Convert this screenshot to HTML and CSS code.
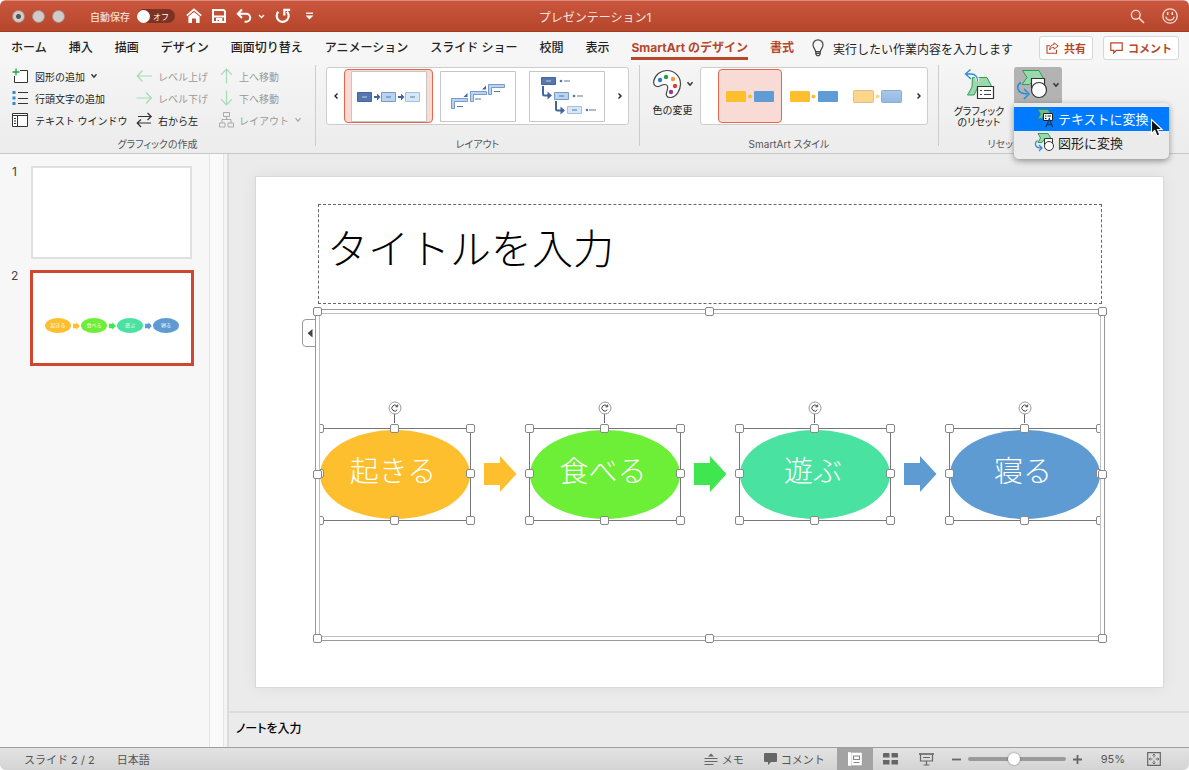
FILE: index.html
```html
<!DOCTYPE html>
<html lang="ja">
<head>
  <meta charset="UTF-8">
  <meta name="viewport" content="width=device-width, initial-scale=1.0">
  <title>プレゼンテーション1</title>
  <link rel="stylesheet" href="styles.css">
</head>
<body>
  <div class="window">
    <header class="titlebar">
      <div class="title-left">
        <button type="button" class="light edited" aria-label="閉じる"></button>
        <button type="button" class="light" aria-label="しまう"></button>
        <button type="button" class="light" aria-label="拡大"></button>
        <label class="autosave" for="autosave">自動保存</label>
        <span class="switch"><input type="checkbox" id="autosave"><span class="switch-text">オフ</span></span>
        <button type="button" class="quick" aria-label="ホーム">
          <svg width="16" height="16" viewBox="0 0 16 16"><path d="M.8 7.6 8 1.4l7.2 6.2" fill="none" stroke="#fff" stroke-width="1.8"/><path d="M2.4 8.6 8 3.9l5.6 4.7V15H10v-4.6H6V15H2.4z" fill="#fff"/></svg>
        </button>
        <button type="button" class="quick save" aria-label="保存">
          <svg width="14" height="14" viewBox="0 0 14 14"><path d="M1 1h10.6L13 2.4V13H1z" fill="none" stroke="#fff" stroke-width="2"/><path d="M2 6.6h10v2H2zM4 9h6.4v4.4H7V11H5.6v2.4H4z" fill="#fff"/></svg>
        </button>
        <button type="button" class="quick undo" aria-label="元に戻す">
          <svg width="16" height="14" viewBox="0 0 16 14"><path d="M6 .5 1.8 4.800 6 9M2 4.800h8.200a4 4 0 0 1 0 8H8.600" fill="none" stroke="#fff" stroke-width="2.100"/></svg>
          <svg width="7" height="5" viewBox="0 0 7 5"><path d="M1 1l2.5 2.5L6 1" fill="none" stroke="#fff" stroke-width="1.3"/></svg>
        </button>
        <button type="button" class="quick" aria-label="繰り返し">
          <svg width="16" height="16" viewBox="0 0 16 16"><path d="M3.300 3.800a6 6 0 1 0 8.600-.2M15.200 1.800H9.300v5.600" fill="none" stroke="#fff" stroke-width="2.200"/></svg>
        </button>
        <button type="button" class="quick more" aria-label="カスタマイズ">
          <svg width="9" height="8" viewBox="0 0 9 8"><path d="M1 1.2h7" stroke="#fff" stroke-width="1.3"/><path d="M.6 3.4h7.8L4.5 7.4z" fill="#fff"/></svg>
        </button>
      </div>
      <h1 class="doc-title">プレゼンテーション1</h1>
      <div class="title-right">
        <button type="button" aria-label="検索">
          <svg width="15" height="15" viewBox="0 0 15 15"><circle cx="5.8" cy="5.8" r="4.4" fill="none" stroke="#f6dcd5" stroke-width="1.4"/><path d="M9 9l5 5" stroke="#f6dcd5" stroke-width="1.6"/></svg>
        </button>
        <button type="button" aria-label="フィードバック">
          <svg width="16" height="16" viewBox="0 0 16 16"><circle cx="8" cy="8" r="7.2" fill="none" stroke="#f6dcd5" stroke-width="1.3"/><path d="M5.7 4v3M10.3 4v3" stroke="#f6dcd5" stroke-width="1.5"/><path d="M3.8 8.7a4.3 4.3 0 0 0 8.4 0" fill="none" stroke="#f6dcd5" stroke-width="1.3"/></svg>
        </button>
      </div>
    </header>

    <nav class="tabs">
      <a href="#">ホーム</a>
      <a href="#">挿入</a>
      <a href="#">描画</a>
      <a href="#">デザイン</a>
      <a href="#">画面切り替え</a>
      <a href="#">アニメーション</a>
      <a href="#">スライド ショー</a>
      <a href="#">校閲</a>
      <a href="#">表示</a>
      <a href="#" class="context active">SmartArt のデザイン</a>
      <a href="#" class="context">書式</a>
      <button type="button" class="tell-me">
        <svg width="12" height="18" viewBox="0 0 12 18"><path d="M3.6 12.6C3.4 10 1 9 1 5.8a5 5 0 0 1 10 0c0 3.200-2.400 4.200-2.600 6.800zM3.800 12.800v2.200l1.200 1.600h2l1.200-1.600v-2.200M4 14.300h4" fill="none" stroke="#444" stroke-width="1.2"/></svg>
        実行したい作業内容を入力します
      </button>
      <div class="tab-actions">
        <button type="button" class="outline-btn">
          <svg width="13" height="12" viewBox="0 0 13 12"><path d="M4 3.800H1v7.500h9.500V7.800" fill="none" stroke="#b7472a" stroke-width="1.1"/><path d="M8 .8 12.200 4 8 7.200V5.400C5.800 5.300 4.600 6.200 3.600 8 3.800 4.600 5.400 2.800 8 2.600z" fill="none" stroke="#b7472a"/></svg>
          共有
        </button>
        <button type="button" class="outline-btn">
          <svg width="13" height="12" viewBox="0 0 13 12"><path d="M.8.800h11.400v7.600H6.500L3.800 11V8.400h-3z" fill="none" stroke="#b7472a" stroke-width="1.200"/></svg>
          コメント
        </button>
      </div>
    </nav>

    <section class="ribbon">
      <div class="group group-create">
        <div class="commands">
          <button type="button" class="cmd">
            <svg width="18" height="16" viewBox="0 0 18 16"><path d="M8 2.500h7.500v12h-13V8" fill="#fff" stroke="#333"/><path d="M4 .5v7M.5 4h7" stroke="#1fa24a" stroke-width="1.300"/></svg>
            図形の追加
            <svg class="caret" width="8" height="6" viewBox="0 0 8 6"><path d="M1.500 1.200 4 4.200l2.500-3" fill="none" stroke="#333" stroke-width="1.400"/></svg>
          </button>
          <button type="button" class="cmd" disabled>
            <svg width="17" height="16" viewBox="0 0 17 16"><path d="M16 8H1.500M6.500 2.500 1.200 8l5.300 5.500" fill="none" stroke="#a3d9b4" stroke-width="1.200"/></svg>
            レベル上げ
          </button>
          <button type="button" class="cmd" disabled>
            <svg width="15" height="16" viewBox="0 0 15 16"><path d="M7.500 15.500v-14M2 6.800 7.500 1 13 6.800" fill="none" stroke="#a3d9b4" stroke-width="1.200"/></svg>
            上へ移動
          </button>
          <button type="button" class="cmd">
            <svg width="18" height="16" viewBox="0 0 18 16"><path d="M.5 1h3v3h-3zM.5 6.500h3v3h-3zM.5 12h3v3h-3z" fill="#2a8dd4"/><path d="M6 2.500h10M6 8.500h10M6 13.500h10" stroke="#333"/></svg>
            行頭文字の追加
          </button>
          <button type="button" class="cmd" disabled>
            <svg width="17" height="16" viewBox="0 0 17 16"><path d="M.5 8H15M10 2.500 15.300 8 10 13.500" fill="none" stroke="#a3d9b4" stroke-width="1.200"/></svg>
            レベル下げ
          </button>
          <button type="button" class="cmd" disabled>
            <svg width="15" height="16" viewBox="0 0 15 16"><path d="M7.500.5v14M2 9.200 7.500 15 13 9.200" fill="none" stroke="#a3d9b4" stroke-width="1.200"/></svg>
            下へ移動
          </button>
          <button type="button" class="cmd">
            <svg width="18" height="16" viewBox="0 0 18 16"><path d="M.5 1.500h15v13H.5z" fill="#fff" stroke="#333"/><path d="M.5 3.500h15M5.500 3.500v11" stroke="#333"/><path d="M2 6.500h2M2 9h2M2 11.500h2" stroke="#333"/></svg>
            テキスト ウインドウ
          </button>
          <button type="button" class="cmd">
            <svg width="17" height="16" viewBox="0 0 17 16"><path d="M2 4.500h13M11.500 1l3.700 3.500L11.500 8M15 11H2M5 7.500 1.200 11 5 15" fill="none" stroke="#333" stroke-width="1.200"/></svg>
            右から左
          </button>
          <button type="button" class="cmd" disabled>
            <svg width="15" height="16" viewBox="0 0 15 16"><path d="M4.500.5h6v4h-6zM.5 11h5.500v4H.5zM9 11h5.500v4H9zM7.500 4.500v3M3 11V7.500h9V11" fill="none" stroke="#aaa"/></svg>
            レイアウト
            <svg class="caret" width="8" height="6" viewBox="0 0 8 6"><path d="M1.500 1.200 4 4.200l2.500-3" fill="none" stroke="#aaa" stroke-width="1.300"/></svg>
          </button>
        </div>
        <div class="caption">グラフィックの作成</div>
      </div>

      <div class="group group-layout">
        <div class="gallery">
          <button type="button" class="scroll" aria-label="前へ"><svg width="6" height="8" viewBox="0 0 6 8"><path d="M4.500 1.500 2 4l2.500 2.500" fill="none" stroke="#222" stroke-width="1.400"/></svg></button>
          <button type="button" class="layout-item selected" aria-label="基本ステップ">
            <svg width="76" height="51" viewBox="0 0 76 51"><path d="M.5.5h75v50H.5z" fill="#fff" stroke="#c6c6c6"/><path d="M6.500 21.500h14v9h-14z" fill="#5577ad" stroke="#41659f"/><path d="M30.500 21.500h14v9h-14z" fill="#b9d4ef" stroke="#7799cb"/><path d="M54.500 21.500h14v9h-14z" fill="#d6e8f8" stroke="#9cc3e6"/><path d="M11 26h5" stroke="#b9d4ef"/><path d="M35 26h5M59 26h5" stroke="#5577ad"/><path d="M23 25h3v-2.500l3.500 3.500-3.500 3.500V27h-3zM47 25h3v-2.500l3.500 3.500-3.500 3.500V27h-3z" fill="#41659f"/></svg>
          </button>
          <button type="button" class="layout-item" aria-label="ステップ アップ">
            <svg width="76" height="51" viewBox="0 0 76 51"><path d="M.5.5h75v50H.5z" fill="#fff" stroke="#c6c6c6"/><path d="M11.500 37.500v-10h16v3h-13v7zM30.500 30.500v-10h16v3h-13v7zM48.500 23.500v-10h16v3h-13v7z" fill="#b9d4ef" stroke="#7799cb"/><path d="M17 35.500h6M35 28h6M54 20.500h6" stroke="#5577ad"/><path d="M23.500 26h4v-4zM42 18.500h4v-4z" fill="#41659f"/></svg>
          </button>
          <button type="button" class="layout-item" aria-label="段違いステップ">
            <svg width="76" height="51" viewBox="0 0 76 51"><path d="M.5.5h75v50H.5z" fill="#fff" stroke="#c6c6c6"/><path d="M12.500 6.500h14v7h-14z" fill="#5577ad" stroke="#41659f"/><path d="M25.500 21.500h14v7h-14z" fill="#b9d4ef" stroke="#7799cb"/><path d="M38.500 35.500h14v7h-14z" fill="#d6e8f8" stroke="#9cc3e6"/><path d="M17 10h5" stroke="#b9d4ef"/><path d="M30 25h5M43 39h5M35 10h6M48 25h6M60 39h7" stroke="#5577ad"/><circle cx="32" cy="10" r="1.300" fill="#5577ad"/><circle cx="45" cy="25" r="1.300" fill="#5577ad"/><circle cx="58" cy="39" r="1.300" fill="#5577ad"/><path d="M14 15v8q0 1.500 1.500 1.500H19M27 30v8q0 1.500 1.500 1.500H32" fill="none" stroke="#41659f" stroke-width="2"/><path d="M18.500 20.500l4.500 4-4.500 4zM31.500 35.500l4.500 4-4.500 4z" fill="#41659f"/></svg>
          </button>
          <button type="button" class="scroll" aria-label="次へ"><svg width="6" height="8" viewBox="0 0 6 8"><path d="M1.500 1.500 4 4 1.500 6.500" fill="none" stroke="#222" stroke-width="1.400"/></svg></button>
        </div>
        <div class="caption">レイアウト</div>
      </div>

      <div class="group group-style">
        <div class="row">
          <button type="button" class="big-btn colors">
            <span class="icon-row">
              <svg width="30" height="30" viewBox="0 0 30 30"><path d="M15 1.500C22.500 1.500 28.500 7.500 28.500 15c0 6-4 13-10 13.500-4 .3-5-3-3.500-6.500 1.500-3.600 1-6.500-2.500-6.500-3.300 0-4 2.500-7.500 2C1.800 17 1.300 14 1.800 12 3 6 8.500 1.500 15 1.500z" fill="#fff" stroke="#444" stroke-width="1.200"/><circle cx="8" cy="11" r="2.200" fill="#2482cc"/><circle cx="14" cy="8" r="2.200" fill="#1fa24a"/><circle cx="21" cy="10" r="2.200" fill="#f2973a"/><circle cx="23" cy="17" r="2.200" fill="#d9432e"/><circle cx="19" cy="23" r="2.200" fill="#92379b"/></svg>
              <svg width="8" height="6" viewBox="0 0 8 6"><path d="M1.500 1.200 4 4.200l2.500-3" fill="none" stroke="#333" stroke-width="1.500"/></svg>
            </span>
            色の変更
          </button>
          <div class="gallery style-gallery">
            <button type="button" class="style-item selected" aria-label="シンプル">
              <svg width="48" height="14" viewBox="0 0 48 14"><rect y="2" width="20" height="11" rx="1" fill="#fdbf2d"/><rect x="28" y="2" width="20" height="11" rx="1" fill="#5f9bd5"/><circle cx="24" cy="7.500" r="2" fill="#fdbf2d"/></svg>
            </button>
            <button type="button" class="style-item" aria-label="白枠">
              <svg width="48" height="14" viewBox="0 0 48 14"><rect y="2" width="20" height="11" rx="1" fill="#fdbf2d"/><rect x="28" y="2" width="20" height="11" rx="1" fill="#5f9bd5"/><circle cx="23.500" cy="7.500" r="2" fill="#fdbf2d"/></svg>
            </button>
            <button type="button" class="style-item" aria-label="パステル">
              <svg width="50" height="14" viewBox="0 0 50 14"><defs><linearGradient id="pale-blue" x2="0" y2="1"><stop stop-color="#a9c8ea"/><stop offset="1" stop-color="#91b9e4"/></linearGradient></defs><rect x=".5" y="1.500" width="20" height="12" rx="1" fill="#fed68a" stroke="#d9bf8e"/><rect x="28.500" y="1.500" width="20" height="12" rx="1" fill="url(#pale-blue)" stroke="#91acc9"/><circle cx="24.500" cy="7.500" r="2" fill="#fed68a"/></svg>
            </button>
            <button type="button" class="scroll" aria-label="次へ"><svg width="6" height="8" viewBox="0 0 6 8"><path d="M1.500 1.500 4 4 1.500 6.500" fill="none" stroke="#222" stroke-width="1.400"/></svg></button>
          </div>
        </div>
        <div class="caption">SmartArt スタイル</div>
      </div>

      <div class="group group-reset">
        <div class="row">
          <button type="button" class="big-btn reset">
            <svg width="34" height="32" viewBox="0 0 34 32"><path d="M10.500 9.500H25l5 9.500H16l-4 8H5.500l4.500-8z" fill="#9bd8ac" stroke="#2f9e58"/><path d="M15.500 18.500h16v12h-16z" fill="#fff" stroke="#333" stroke-width="1.200"/><path d="M18 22.500h2M22 22.500h7M18 26.500h2M22 26.500h7" stroke="#444"/><path d="M8.500 1.500 3.500 6l5.500 5M4 6h5c4.500 0 7 3 6.500 7.500" fill="none" stroke="#f1f1f1" stroke-width="3.500"/><path d="M8.500 1.500 3.500 6l5.500 5M4 6h5c4.500 0 7 3 6.500 7.500" fill="none" stroke="#2a8dd4" stroke-width="1.300"/></svg>
            <span>グラフィック<br>のリセット</span>
          </button>
          <div class="convert">
            <button type="button" class="convert-btn" aria-label="変換" aria-expanded="true">
              <svg width="32" height="32" viewBox="0 0 32 32"><use href="#convert-icon"/></svg>
              <svg width="8" height="6" viewBox="0 0 8 6"><path d="M1.500 1.200 4 4.200l2.500-3" fill="none" stroke="#333" stroke-width="1.500"/></svg>
            </button>
            <div class="menu">
              <button type="button" class="menu-item active">
                <svg width="20" height="20" viewBox="0 0 20 20"><path d="M4 1.500h10l3 5h-7l-2 4H4l2.500-4.500z" fill="#6db98a" stroke="#2f8f5b" stroke-width=".8"/><path d="M3.500 8C0 11 1 16 7 16M5 13.500 8 16l-3 3" fill="none" stroke="#2676bb" stroke-dasharray="2 1"/><path d="M9.500 5.500h9v7h-9z" fill="#fff" stroke="#222"/><path d="M11 8h1.500M13.500 8H17M11 10.500h1.500" stroke="#222"/><path d="M12 19l3.300-8 3.300 8M13 16.500h4.500" fill="none" stroke="#143a66" stroke-width="1.300"/></svg>
                テキストに変換
              </button>
              <button type="button" class="menu-item">
                <svg width="20" height="20" viewBox="0 0 20 20"><path d="M4 1.500h10l3 5h-6l-3 4H4l2.500-4.500z" fill="#9bd8ac" stroke="#2f9e58"/><path d="M3.500 8.500C0 11 1 16 7 16M5 13l3 3-3 3" fill="none" stroke="#2a8dd4" stroke-width="1.200"/><path d="M10.500 6.500h8v6h-8z" fill="#fff" stroke="#333"/><circle cx="15" cy="14" r="4.500" fill="#fff" stroke="#333"/></svg>
                図形に変換
              </button>
            </div>
            <svg class="cursor" width="15" height="20" viewBox="0 0 15 20"><path d="M1.500 1.500v14l3.200-3 2.400 5.500 2.700-1.200-2.300-5.300h4.600z" fill="#111" stroke="#fff" stroke-width="1.100"/></svg>
          </div>
        </div>
        <div class="caption">リセット</div>
      </div>
    </section>

    <main class="workspace">
      <aside class="slides">
        <div class="slide-entry">
          <span class="slide-no">1</span>
          <button type="button" class="thumb" aria-label="スライド 1"></button>
        </div>
        <div class="slide-entry current">
          <span class="slide-no">2</span>
          <button type="button" class="thumb" aria-label="スライド 2">
            <span class="mini orange">起きる</span>
            <svg class="c-orange" width="7" height="8" viewBox="0 0 33 38"><use href="#arrow"/></svg>
            <span class="mini green">食べる</span>
            <svg class="c-green" width="7" height="8" viewBox="0 0 33 38"><use href="#arrow"/></svg>
            <span class="mini teal">遊ぶ</span>
            <svg class="c-blue" width="7" height="8" viewBox="0 0 33 38"><use href="#arrow"/></svg>
            <span class="mini blue">寝る</span>
          </button>
        </div>
      </aside>
      <div class="gutter"></div>
      <section class="editor">
        <div class="canvas">
          <div class="slide">
            <h2 class="slide-title">タイトルを入力</h2>
            <div class="smartart">
              <div class="node">
                <div class="oval orange">起きる</div>
                <i class="h tl"></i><i class="h tc"></i><i class="h tr"></i><i class="h ml"></i><i class="h mr"></i><i class="h bl"></i><i class="h bc"></i><i class="h br"></i>
                <svg class="rotate" width="14" height="22" viewBox="0 0 14 22"><use href="#rotate"/></svg>
              </div>
              <svg class="c-orange" width="33" height="38" viewBox="0 0 33 38"><use href="#arrow"/></svg>
              <div class="node">
                <div class="oval green">食べる</div>
                <i class="h tl"></i><i class="h tc"></i><i class="h tr"></i><i class="h ml"></i><i class="h mr"></i><i class="h bl"></i><i class="h bc"></i><i class="h br"></i>
                <svg class="rotate" width="14" height="22" viewBox="0 0 14 22"><use href="#rotate"/></svg>
              </div>
              <svg class="c-green" width="33" height="38" viewBox="0 0 33 38"><use href="#arrow"/></svg>
              <div class="node">
                <div class="oval teal">遊ぶ</div>
                <i class="h tl"></i><i class="h tc"></i><i class="h tr"></i><i class="h ml"></i><i class="h mr"></i><i class="h bl"></i><i class="h bc"></i><i class="h br"></i>
                <svg class="rotate" width="14" height="22" viewBox="0 0 14 22"><use href="#rotate"/></svg>
              </div>
              <svg class="c-blue" width="33" height="38" viewBox="0 0 33 38"><use href="#arrow"/></svg>
              <div class="node">
                <div class="oval blue">寝る</div>
                <i class="h tl"></i><i class="h tc"></i><i class="h tr"></i><i class="h ml"></i><i class="h mr"></i><i class="h bl"></i><i class="h bc"></i><i class="h br"></i>
                <svg class="rotate" width="14" height="22" viewBox="0 0 14 22"><use href="#rotate"/></svg>
              </div>
              <button type="button" class="text-pane" aria-label="テキスト ウインドウを開く"><svg width="6" height="9" viewBox="0 0 6 9"><path d="M5.500 0v8.500L.5 4.200z" fill="#444"/></svg></button>
              <div class="frame">
                <i class="h tl"></i><i class="h tc"></i><i class="h tr"></i><i class="h ml"></i><i class="h mr"></i><i class="h bl"></i><i class="h bc"></i><i class="h br"></i>
              </div>
            </div>
          </div>
        </div>
        <div class="notes">ノートを入力</div>
      </section>
    </main>

    <footer class="statusbar">
      <span class="count">スライド 2 / 2</span>
      <button type="button" class="lang">日本語</button>
      <div class="status-right">
        <button type="button" class="memo">
          <svg width="14" height="13" viewBox="0 0 14 13"><path d="M7 .5 10 3.500H4z" fill="#666"/><path d="M.5 5.500h13M.5 8.500h13M.5 11.500h9" stroke="#666" stroke-width="1.200"/></svg>
          メモ
        </button>
        <button type="button" class="comments">
          <svg width="13" height="12" viewBox="0 0 13 12"><path d="M1 0h11q1 0 1 1v7q0 1-1 1H7l-3 3V9H1Q0 9 0 8V1q0-1 1-1z" fill="#666"/></svg>
          コメント
        </button>
        <button type="button" class="view on" aria-label="標準">
          <svg width="14" height="14" viewBox="0 0 14 14"><path d="M0 .5h3v13H0zM3.800 1h9.700v12H3.800z" fill="#fff" stroke="#fff" stroke-width=".6"/><path d="M5.500 4h6v3.500h-6zM5.500 10.500h6" fill="none" stroke="#888" stroke-width="1.200"/></svg>
        </button>
        <button type="button" class="view" aria-label="スライド一覧">
          <svg width="15" height="12" viewBox="0 0 15 12"><path d="M0 1q0-1 1-1h4.500q1 0 1 1v3.500H0zM8.500 0H14q1 0 1 1v3.500H8.500zM0 7h6.500v4.500H0zM8.500 7H15v4.500H8.500z" fill="#666"/></svg>
        </button>
        <button type="button" class="view" aria-label="スライド ショー">
          <svg width="15" height="13" viewBox="0 0 15 13"><path d="M0 1h15" stroke="#666" stroke-width="1.600"/><path d="M1.500 1.500V8h12V1.500M4 4.500h7M7.500 8v4M4.500 12h6" fill="none" stroke="#666" stroke-width="1.200"/></svg>
        </button>
        <button type="button" class="step" aria-label="縮小"><svg width="9" height="9" viewBox="0 0 9 9"><path d="M0 4.500h9" stroke="#666" stroke-width="1.800"/></svg></button>
        <input type="range" class="zoom" min="0" max="100" value="47" aria-label="ズーム">
        <button type="button" class="step" aria-label="拡大"><svg width="9" height="9" viewBox="0 0 9 9"><path d="M0 4.500h9M4.500 0v9" stroke="#666" stroke-width="1.800"/></svg></button>
        <button type="button" class="percent">95%</button>
        <button type="button" class="fit" aria-label="ウインドウに合わせる">
          <svg width="14" height="14" viewBox="0 0 14 14"><path d="M.7.700h12.600v12.600H.7z" fill="none" stroke="#666" stroke-width="1.200"/><path d="M7 2v3.500M7 8.500V12M2 7h3.500M8.500 7H12" stroke="#666"/><path d="M5.500 3.500 7 2l1.500 1.500M5.500 10.500 7 12l1.500-1.500M3.500 5.500 2 7l1.500 1.500M10.500 5.500 12 7l-1.500 1.500" fill="none" stroke="#666" stroke-width=".8"/></svg>
        </button>
      </div>
    </footer>
  </div>

  <!-- shared shapes -->
  <svg width="0" height="0" class="defs" aria-hidden="true">
    <symbol id="arrow" viewBox="0 0 33 38"><path d="M0 8h16V1l16.500 18L16 37v-7H0z" fill="currentColor"/></symbol>
    <symbol id="rotate" viewBox="0 0 14 22"><path d="M6.500 13v9" stroke="#666"/><circle cx="7" cy="7" r="6" fill="#fff" stroke="#999"/><path d="M9.300 8.800A3 3 0 1 1 9 5M9.700 3.500v2.300H7.500" fill="none" stroke="#444"/></symbol>
    <symbol id="convert-icon" viewBox="0 0 32 32"><path d="M6.500 1.500H23l5 9h-9.500l-5 5H6l5-7z" fill="#9bd8ac" stroke="#2f9e58"/><path d="M15.500 9.500h13v9h-13z" fill="#fff" stroke="#333" stroke-width="1.200"/><circle cx="23" cy="21" r="7.500" fill="#fff" stroke="#333" stroke-width="1.200"/><path d="M5 13.500c-5 2.500-5 11 6 11.500M8 20l5 5-5 5" fill="none" stroke="#2a8dd4" stroke-width="1.500"/></symbol>
  </svg>
</body>
</html>
```

FILE: styles.css
```css
* {
  box-sizing: border-box;
  margin: 0;
  padding: 0;
}
body {
  font-family: Inter, "Noto Sans CJK JP", sans-serif;
  font-size: 12px;
  color: #222;
  background-color: #fff;
}
button {
  font: inherit;
  color: inherit;
  background: none;
  border: none;
  white-space: nowrap;
}
a {
  color: inherit;
  text-decoration: none;
}
svg {
  display: block;
  flex-shrink: 0;
}
.defs {
  position: absolute;
}
.window {
  display: flex;
  flex-direction: column;
  height: 100vh;
  border-radius: 6px;
  overflow: hidden;
  background-color: #ebebeb;
}

/* title bar */
.titlebar {
  display: grid;
  grid-template-columns: 1fr auto 1fr;
  align-items: center;
  height: 32px;
  padding: 0 11px 0 12px;
  color: #fff;
  background: linear-gradient(#ca563e, #b5462b);
  border-top: 1px solid #d98c7c;
  border-bottom: 1px solid #a33b22;
}
.title-left,
.title-right {
  display: flex;
  align-items: center;
}
.title-right {
  justify-content: flex-end;
  gap: 17px;
}
.light {
  width: 13px;
  height: 13px;
  margin-right: 7px;
  border-radius: 50%;
  border: 1px solid #ab8b84;
  background-color: #cfcbca;
}
.edited {
  background: radial-gradient(circle, #555 2px, #cfcbca 3px);
}
.autosave {
  margin-left: 18px;
  font-size: 10px;
  font-weight: 500;
  color: #f6dcd5;
}
.switch {
  display: flex;
  align-items: center;
  gap: 3px;
  width: 38px;
  height: 14px;
  margin: 0 11px 0 7px;
  border-radius: 7px;
  background-color: #7d3322;
}
.switch input {
  appearance: none;
  width: 13px;
  height: 13px;
  border-radius: 50%;
  background-color: #fff;
}
.switch-text {
  font-size: 8px;
}
.quick {
  display: flex;
  align-items: center;
  gap: 6px;
  margin-right: 10px;
}
.more {
  margin-left: 4px;
}
.doc-title {
  font-size: 12px;
  font-weight: 400;
  color: #f9e5e0;
}

/* tabs */
.tabs {
  display: flex;
  align-items: center;
  gap: 22px;
  height: 32px;
  padding: 0 10px 0 11px;
  font-weight: 500;
  white-space: nowrap;
  background-color: #f6f6f6;
}
.tabs a {
  line-height: 18px;
  border-bottom: 3px solid transparent;
  border-top: 3px solid transparent;
}
.tabs .context {
  color: #b7472a;
  font-weight: 700;
}
.tabs .active {
  border-bottom-color: #b7472a;
}
.tell-me {
  display: flex;
  align-items: center;
  gap: 9px;
  margin-left: -4px;
  font-weight: 400;
}
.tab-actions {
  display: flex;
  gap: 10px;
  margin-left: auto;
}
.outline-btn {
  display: flex;
  align-items: center;
  gap: 5px;
  height: 24px;
  padding: 0 6px;
  font-size: 11px;
  font-weight: 700;
  color: #b7472a;
  background-color: #fff;
  border: 1px solid #d6d6d6;
  border-radius: 3px;
}

/* ribbon */
.ribbon {
  display: flex;
  padding-top: 1px;
  height: 90px;
  font-size: 10px;
  background: linear-gradient(#f5f5f5, #ececec);
  border-bottom: 1px solid #c8c8c8;
}
.group {
  display: flex;
  flex-direction: column;
  height: 81px;
  border-right: 1px solid #cdcdcd;
}
.group:last-child {
  flex: 1;
  border-right: none;
}
.caption {
  margin: auto 0 -4px;
  line-height: 12px;
  text-align: center;
  font-feature-settings: "palt";
  color: #555;
}
.commands {
  display: grid;
  grid-template-columns: 124px 83px 96px;
  grid-auto-rows: 22px;
  padding-left: 12px;
}
.cmd {
  display: flex;
  align-items: center;
  gap: 5px;
}
.cmd:disabled {
  color: #999;
}
.gallery {
  display: flex;
  align-items: center;
  height: 58px;
  margin: 2px 10px 0;
  background-color: #fff;
  border: 1px solid #cdcdcd;
  border-radius: 3px;
}
.scroll {
  display: flex;
  justify-content: center;
  width: 17px;
}
.layout-item,
.style-item {
  display: flex;
  justify-content: center;
  align-items: center;
  width: 89px;
  height: 54px;
  border: 1px solid transparent;
  border-radius: 4px;
}
.style-item {
  width: 64px;
}
.gallery .selected {
  background-color: #f9dbd5;
  border-color: #e8654a;
}
.row {
  display: flex;
  align-items: flex-start;
}
.big-btn {
  display: flex;
  flex-direction: column;
  align-items: center;
  line-height: 11px;
}
.colors {
  gap: 6px;
  width: 60px;
  padding: 4px 0 0 5px;
}
.icon-row {
  display: flex;
  align-items: center;
  gap: 4px;
}
.style-gallery {
  width: 228px;
  margin: 2px 10px 0 0;
}
.style-item:first-child {
  margin-left: 17px;
}
.style-gallery .scroll {
  margin-left: auto;
}
.reset {
  gap: 6px;
  width: 75px;
  padding: 3px 0 0 5px;
  font-feature-settings: "palt";
}
.convert {
  position: relative;
}
.convert-btn {
  display: flex;
  align-items: center;
  gap: 4px;
  width: 48px;
  height: 36px;
  margin-top: 2px;
  padding-left: 2px;
  border-radius: 3px 3px 0 0;
  background-color: #b3b3b3;
}
.group-reset .caption {
  width: 130px;
}
.menu {
  position: absolute;
  z-index: 10;
  top: 38px;
  left: 0;
  width: 155px;
  padding: 4px 0;
  background-color: #ebebeb;
  border-radius: 0 4px 5px 5px;
  box-shadow: 0 2px 6px rgba(0, 0, 0, 0.4);
}
.menu-item {
  display: flex;
  align-items: center;
  gap: 4px;
  width: 100%;
  height: 24px;
  padding: 0 0 2px 20px;
  font-size: 13px;
}
.menu-item.active {
  color: #fff;
  background-color: #007aff;
}
.cursor {
  position: absolute;
  z-index: 11;
  top: 53px;
  left: 136px;
}

/* workspace */
.workspace {
  display: flex;
  flex: 1;
  min-height: 0;
}
.slides {
  width: 210px;
  padding: 12px 0 0 11px;
  background-color: #f7f7f7;
  border-right: 1px solid #e4e4e4;
}
.slide-entry {
  display: flex;
  align-items: flex-start;
  padding-left: 1px;
  margin-bottom: 11px;
}
.slide-no {
  width: 19px;
  line-height: 12px;
  color: #444;
}
.thumb {
  display: flex;
  align-items: center;
  justify-content: space-between;
  width: 161px;
  height: 93px;
  background-color: #fff;
  border: 2px solid #e0e0e0;
}
.current {
  padding-left: 0;
}
.current .thumb {
  width: 164px;
  height: 96px;
  padding: 15px 12px 0;
  border: 3px solid #d0472e;
}
.mini {
  width: 26px;
  height: 15px;
  font-size: 5px;
  line-height: 15px;
  text-align: center;
  border-radius: 50%;
  color: #fff;
}
.gutter {
  width: 19px;
  background: linear-gradient(90deg, #fafafa 13px, #e6e6e6 13px, #e6e6e6 14px, #f4f4f4 14px, #f4f4f4 17px, #dcdcdc 17px);
}
.editor {
  display: flex;
  flex-direction: column;
  flex: 1;
  min-width: 0;
}
.canvas {
  display: flex;
  flex: 1;
  padding: 22px 25px 23px 26px;
}
.slide {
  display: flex;
  flex-direction: column;
  flex: 1;
  padding: 27px 58px 46px 59px;
  background-color: #fff;
  border: 1px solid #d9d9d9;
  box-shadow: 0 0 16px rgba(0, 0, 0, 0.06);
}
.slide-title {
  height: 100px;
  margin: 0 3px 5px;
  padding-left: 8px;
  font-size: 41px;
  font-weight: 300;
  line-height: 88px;
  color: #000;
  border: 1px dashed #666;
}
.smartart {
  position: relative;
  display: flex;
  align-items: center;
  justify-content: space-between;
  flex: 1;
  padding: 0 4px 2px;
}
.node {
  position: relative;
  width: 152px;
  height: 93px;
  padding: 1px 0;
  border: 1px solid #777;
}
.oval {
  height: 100%;
  padding-right: 4px;
  border-radius: 50%;
  font-size: 29px;
  font-weight: 300;
  line-height: 84px;
  text-align: center;
  color: #fff;
}
.orange { background-color: #fdbf2d; }
.green { background-color: #6dee37; }
.teal { background-color: #4ae2a0; }
.blue { background-color: #5f9bd3; }
.c-orange { color: #fdbf2d; }
.c-green { color: #3fe64f; }
.c-blue { color: #5f9bd3; }

/* selection handles */
.h {
  position: absolute;
  width: 9px;
  height: 9px;
  background-color: #fff;
  border: 1px solid #888;
  border-radius: 2px;
}
.tl, .tc, .tr { top: -5px; }
.ml, .mr { top: calc(50% - 5px); }
.bl, .bc, .br { bottom: -5px; }
.tl, .ml, .bl { left: -5px; }
.tc, .bc { left: calc(50% - 5px); }
.tr, .mr, .br { right: -5px; }
.rotate {
  position: absolute;
  top: -28px;
  left: calc(50% - 7px);
}
.frame {
  position: absolute;
  inset: 0;
  border: 1px solid #999;
  box-shadow: inset 0 0 0 3px #fff, inset 0 0 0 4px #c0c0c0;
  pointer-events: none;
}
.frame .tl, .frame .tc, .frame .tr { top: -3px; }
.frame .bl, .frame .bc, .frame .br { bottom: -3px; }
.frame .tl, .frame .ml, .frame .bl { left: -3px; }
.frame .tr, .frame .mr, .frame .br { right: -3px; }
.text-pane {
  position: absolute;
  top: 10px;
  left: -13px;
  display: flex;
  align-items: center;
  width: 15px;
  height: 28px;
  padding-left: 4px;
  background-color: #fff;
  border: 1px solid #999;
  border-radius: 4px 0 0 4px;
}
.notes {
  height: 36px;
  padding-left: 7px;
  font-weight: 500;
  line-height: 32px;
  font-feature-settings: "palt";
  color: #000;
  border-top: 2px solid #dcdcdc;
}

/* status bar */
.statusbar {
  display: flex;
  align-items: center;
  height: 23px;
  padding: 0 28px 0 24px;
  font-size: 11px;
  color: #555;
  background: linear-gradient(#e3e3e3, #d4d4d4);
  border-top: 1px solid #a0a0a0;
}
.lang {
  margin-left: 22px;
}
.status-right {
  display: flex;
  align-items: center;
  align-self: stretch;
  margin-left: auto;
}
.memo,
.comments {
  display: flex;
  align-items: center;
  gap: 4px;
  margin-right: 20px;
}
.comments {
  margin-right: 12px;
}
.view {
  display: flex;
  align-items: center;
  justify-content: center;
  align-self: stretch;
  width: 36px;
}
.view.on {
  background-color: #a3a3a3;
}
.step {
  margin: 0 7px;
}
.zoom {
  appearance: none;
  width: 98px;
  height: 4px;
  border-radius: 2px;
  background-color: #9a9a9a;
}
.zoom::-webkit-slider-thumb {
  appearance: none;
  width: 12px;
  height: 12px;
  border-radius: 50%;
  background-color: #fff;
  box-shadow: 0 0 2px rgba(0, 0, 0, 0.5);
}
.percent {
  margin: 0 22px 0 12px;
}
```
